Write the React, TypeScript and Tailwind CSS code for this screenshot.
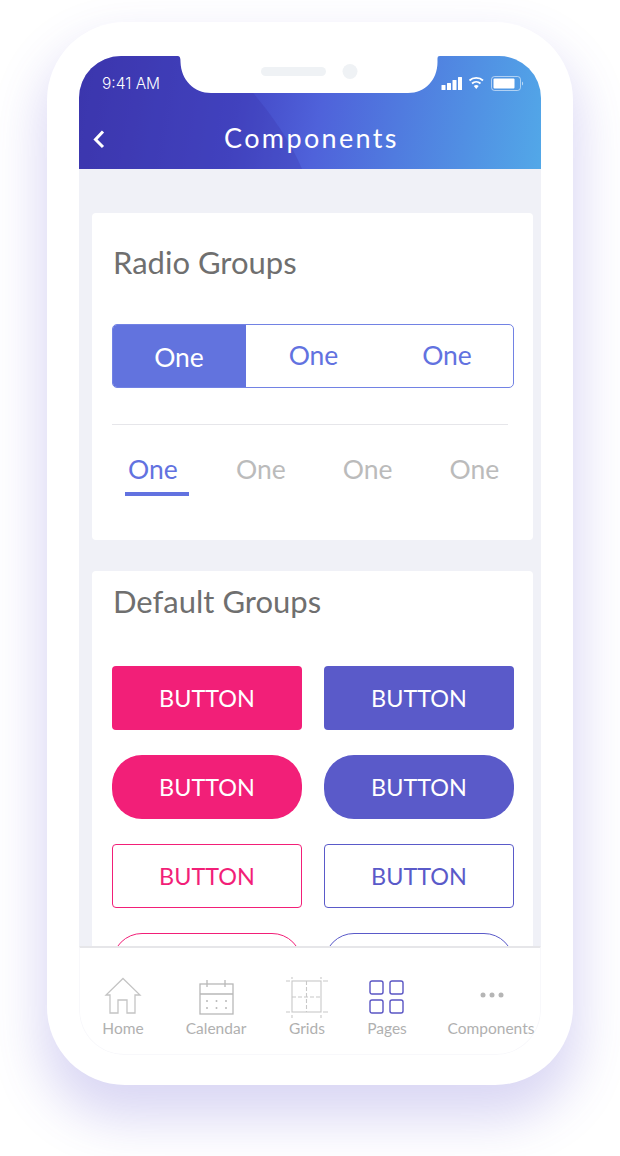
import type { ReactNode } from 'react'

const lato = { fontFamily: 'Lato, "Liberation Sans", sans-serif' }

function Notch() {
  return (
    <svg className="absolute left-[99px] top-0" width="262" height="38" viewBox="0 0 262 38">
      <path d="M0 0H262C259 0 259.500 2 259.500 6C259.500 24 247 37 230 37H33C16 37 3 24 2.500 6C2.500 2 2 0 0 0Z" fill="#fff" />
      <rect x="83" y="11" width="65" height="9" rx="4.500" fill="#eff2f5" />
      <circle cx="172" cy="15.500" r="7.500" fill="#eff2f5" />
    </svg>
  )
}

function StatusIcons() {
  return (
    <svg className="absolute left-[361px] top-[18px]" width="90" height="20" viewBox="0 0 90 20" fill="#fff">
      <rect x="1.500" y="11" width="4" height="5" rx="0.500" />
      <rect x="7" y="9" width="4" height="7" rx="0.500" />
      <rect x="12.500" y="6" width="4" height="10" rx="0.500" />
      <rect x="18" y="3" width="4" height="13" rx="0.500" />
      <path d="M29.500 6.500C33 3 39.500 3 43 6.500" fill="none" stroke="#fff" strokeWidth="1.800" />
      <path d="M32 9.500C34.500 7.300 38 7.300 40.500 9.500" fill="none" stroke="#fff" strokeWidth="1.800" />
      <path d="M33.800 12C35.300 10.700 37.200 10.700 38.700 12L36.250 15Z" />
      <rect x="51.500" y="2.500" width="29" height="14" rx="3" fill="none" stroke="#fff" strokeOpacity="0.550" />
      <rect x="53.500" y="4.500" width="21" height="10" rx="1" />
      <path d="M82 7.500C83.500 8 83.500 11 82 11.500Z" fill="#fff" fillOpacity="0.600" />
    </svg>
  )
}

function Header() {
  return (
    <div className="relative h-[113px] shrink-0 overflow-hidden bg-[linear-gradient(100deg,#3c36ad_0%,#4448c6_35%,#4f62da_52%,#52a8e8_100%)] text-white">
      <svg className="absolute left-0 top-0" width="462" height="113" viewBox="0 0 462 113">
        <path d="M0 0H140C170 30 205 70 223 113H0Z" fill="#3c36ad" fillOpacity="0.300" />
      </svg>
      <Notch />
      <StatusIcons />
      <div className="absolute left-[23px] top-[19px] text-[15.500px] leading-[18px]" style={{ fontFamily: 'Inter, sans-serif', fontWeight: 300 }}>
        9:41 AM
      </div>
      <svg className="absolute left-[13px] top-[73px]" width="14" height="20" viewBox="0 0 14 20">
        <path d="M11 2.500L3.500 10.500L11 18" fill="none" stroke="#fff" strokeWidth="3" />
      </svg>
      <div className="absolute inset-x-0 top-[64px] pl-[3px] text-center text-[27px] leading-[36px] tracking-[2.350px]" style={lato}>
        Components
      </div>
    </div>
  )
}

function RadioCard() {
  return (
    <div className="h-[327px] rounded-[4px] bg-white pl-[20px] pt-[27px]">
      <div className="text-[31px] leading-[44px] pl-[1px] text-[#6f6f6f]">Radio Groups</div>
      <div className="mt-[40px] flex h-[64px] w-[402px] overflow-hidden rounded-[5px] border border-[#7282e4] text-[26.500px] text-[#6272e0]">
        <div className="flex w-[133px] items-center justify-center bg-[#6273de] pt-[3px] pr-[1px] text-white">One</div>
        <div className="flex w-[135px] items-center justify-center pb-[1px]">One</div>
        <div className="flex w-[132px] items-center justify-center pb-[1px]">One</div>
      </div>
      <div className="mt-[36px] h-px w-[396px] bg-[#e6e6ea]" />
      <div className="mt-[21px] flex text-[26.500px] leading-[46px] text-[#bbb]">
        <div className="ml-[13px] w-[64px]">
          <div className="pl-[3px] text-[#6272e0]">One</div>
          <div className="h-[4px] bg-[#6272e0]" />
        </div>
        <div className="ml-[47px]">One</div>
        <div className="ml-[57px]">One</div>
        <div className="ml-[57px]">One</div>
      </div>
    </div>
  )
}

function Btn({ className }: { className: string }) {
  return <div className={`flex h-[64px] items-center justify-center pt-[2px] text-[23.400px] ${className}`}>BUTTON</div>
}

function DefaultCard() {
  return (
    <div className="mt-[31px] rounded-[4px] bg-white pl-[20px] pt-[8px]">
      <div className="pl-[1px] text-[31px] leading-[44px] text-[#6f6f6f]">Default Groups</div>
      <div className="mt-[43px] grid w-[402px] grid-cols-[190px_190px] gap-x-[22px] gap-y-[25px]">
        <Btn className="rounded-[4px] bg-[#f21f78] text-white" />
        <Btn className="rounded-[4px] bg-[#5a5ac9] text-white" />
        <Btn className="rounded-[30px] bg-[#f21f78] text-white" />
        <Btn className="rounded-[30px] bg-[#5a5ac9] text-white" />
        <Btn className="rounded-[4px] border border-[#f21f78] text-[#f21f78]" />
        <Btn className="rounded-[4px] border border-[#5a5ac9] text-[#5a5ac9]" />
        <Btn className="rounded-[30px] border border-[#f21f78] text-[#f21f78]" />
        <Btn className="rounded-[30px] border border-[#5a5ac9] text-[#5a5ac9]" />
      </div>
    </div>
  )
}

function TabItem({ label, className, children }: { label: string; className: string; children: ReactNode }) {
  return (
    <div className={`flex flex-col items-center ${className}`}>
      <div className="flex h-[44px] w-[60px] items-center justify-center">{children}</div>
      <div className="whitespace-nowrap text-[15.500px] leading-[20px] text-[#b0b0b0]">{label}</div>
    </div>
  )
}

function TabBar() {
  return (
    <div className="flex h-[109px] shrink-0 rounded-b-[45px] border-x border-b border-t-2 border-x-[#f8f8fb] border-b-[#f8f8fb] border-t-[#e6e6e9] bg-white pt-[26px]">
      <TabItem label="Home" className="ml-[13px] w-[60px]">
        <svg width="38" height="38" viewBox="0 0 38 38" fill="none" stroke="#c4c4c4" strokeWidth="1.300">
          <path d="M19 1.500L36 18H31V36H23V23H14V36H6V18H2Z" />
        </svg>
      </TabItem>
      <TabItem label="Calendar" className="ml-[31px] w-[64px]">
        <svg className="ml-[2px] mt-[4px]" width="36" height="36" viewBox="0 0 36 36" fill="none" stroke="#b8b8b8" strokeWidth="1.300">
          <rect x="1" y="4" width="33" height="30" />
          <path d="M1 14H34M8 0V7M26 0V7" />
          <g fill="#b8b8b8" stroke="none">
            <circle cx="8" cy="21" r="1" />
            <circle cx="17.500" cy="21" r="1" />
            <circle cx="27" cy="21" r="1" />
            <circle cx="8" cy="28" r="1" />
            <circle cx="17.500" cy="28" r="1" />
            <circle cx="27" cy="28" r="1" />
          </g>
        </svg>
      </TabItem>
      <TabItem label="Grids" className="ml-[29px] w-[60px]">
        <svg className="mt-[3px]" width="42" height="42" viewBox="0 0 42 42" fill="none" stroke="#c8c8c8" strokeWidth="1.100">
          <rect x="6" y="4" width="29" height="31" />
          <path d="M0 4H4M37 4H42M0 35H4M37 35H42M6 0V2M35 0V2M6 38V41M35 38V41" />
          <path d="M20.500 4V35M6 20H35" strokeDasharray="4 2" />
        </svg>
      </TabItem>
      <TabItem label="Pages" className="ml-[20px] w-[60px]">
        <svg className="mt-[3px]" width="36" height="36" viewBox="0 0 36 36" fill="none" stroke="#5a55c4" strokeWidth="1.400">
          <rect x="1" y="1" width="13" height="13" rx="2" />
          <rect x="21" y="1" width="13" height="13" rx="2" />
          <rect x="1" y="20" width="13" height="13" rx="2" />
          <rect x="21" y="20" width="13" height="13" rx="2" />
        </svg>
      </TabItem>
      <TabItem label="Components" className="ml-[44px] w-[60px]">
        <svg className="mb-[2px] ml-[1px]" width="26" height="8" viewBox="0 0 26 8" fill="#b5b5b5">
          <circle cx="4" cy="4" r="2.500" />
          <circle cx="13" cy="4" r="2.500" />
          <circle cx="22" cy="4" r="2.500" />
        </svg>
      </TabItem>
    </div>
  )
}

export default function App() {
  return (
    <div className="h-[1156px] w-[620px] overflow-hidden bg-white pl-[47px] pt-[22px]" style={lato}>
      <div className="h-[1063px] w-[526px] rounded-[78px] bg-white px-[32px] pt-[34px] shadow-[0_28px_50px_6px_rgba(85,75,205,0.22)]">
        <div className="flex h-[999px] w-[462px] flex-col overflow-hidden rounded-b-[45px] rounded-t-[42px] bg-white">
          <Header />
          <div className="min-h-0 flex-1 overflow-hidden bg-[#f0f1f7] px-[13px] pr-[8px] pt-[44px]">
            <RadioCard />
            <DefaultCard />
          </div>
          <TabBar />
        </div>
      </div>
    </div>
  )
}
